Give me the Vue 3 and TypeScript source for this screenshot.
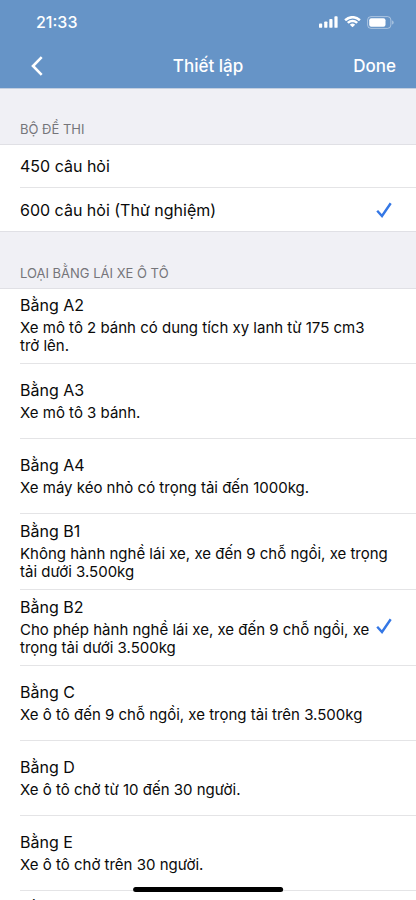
<script setup lang="ts">
import { ref } from 'vue'

interface License {
  id: string
  name: string
  description: string
}

const questionSets: { id: string; label: string }[] = [
  { id: '450', label: '450 câu hỏi' },
  { id: '600', label: '600 câu hỏi (Thử nghiệm)' },
]

const licenses: License[] = [
  { id: 'a2', name: 'Bằng A2', description: 'Xe mô tô 2 bánh có dung tích xy lanh từ 175 cm3 trở\u00a0lên.' },
  { id: 'a3', name: 'Bằng A3', description: 'Xe mô tô 3 bánh.' },
  { id: 'a4', name: 'Bằng A4', description: 'Xe máy kéo nhỏ có trọng tải đến 1000kg.' },
  { id: 'b1', name: 'Bằng B1', description: 'Không hành nghề lái xe, xe đến 9 chỗ ngồi, xe trọng tải dưới 3.500kg' },
  { id: 'b2', name: 'Bằng B2', description: 'Cho phép hành nghề lái xe, xe đến 9 chỗ ngồi, xe trọng tải dưới 3.500kg' },
  { id: 'c', name: 'Bằng C', description: 'Xe ô tô đến 9 chỗ ngồi, xe trọng tải trên 3.500kg' },
  { id: 'd', name: 'Bằng D', description: 'Xe ô tô chở từ 10 đến 30 người.' },
  { id: 'e', name: 'Bằng E', description: 'Xe ô tô chở trên 30 người.' },
  { id: 'f', name: 'Bằng F', description: 'Xe ô tô hạng B2, C, D, E có kéo rơ moóc trọng tải trên 750kg.' },
]

const selectedSet = ref('600')
const selectedLicense = ref('b2')
</script>

<template>
  <div class="screen">
    <header class="top">
      <div class="status">
        <span class="time">21:33</span>
        <div class="indicators">
          <svg class="signal" viewBox="0 0 19 12" aria-hidden="true">
            <rect x="0" y="7.5" width="3.2" height="4.3" rx="0.9" />
            <rect x="5.2" y="5.4" width="3.2" height="6.4" rx="0.9" />
            <rect x="10.3" y="2.9" width="3.2" height="8.9" rx="0.9" />
            <rect x="15.4" y="0.2" width="3.2" height="11.6" rx="0.9" />
          </svg>
          <svg class="wifi" viewBox="0 0 17 12" aria-hidden="true">
            <path d="M8.5 2.4c2.4 0 4.6.9 6.2 2.5.1.1.3.1.5 0l1.2-1.2c.2-.2.2-.4 0-.6a11.4 11.4 0 0 0-15.8 0c-.2.2-.2.4 0 .6l1.2 1.2c.2.1.4.1.5 0A9 9 0 0 1 8.5 2.4z" />
            <path d="M8.5 6.3c1.3 0 2.5.5 3.5 1.3.1.1.3.1.5 0l1.2-1.2c.2-.2.2-.4 0-.6a7.7 7.7 0 0 0-10.4 0c-.2.2-.2.4 0 .6l1.2 1.2c.2.1.4.1.5 0 1-.8 2.2-1.3 3.5-1.3z" />
            <path d="M10.9 8.9c.2-.2.2-.4 0-.5a3.7 3.7 0 0 0-4.8 0c-.2.1-.2.3 0 .5l2.1 2.1c.2.2.4.2.6 0z" />
          </svg>
          <svg class="battery" viewBox="0 0 27 13" aria-hidden="true">
            <rect x="0.6" y="0.6" width="23.3" height="11.8" rx="3.4" fill="none" stroke="#fff" stroke-opacity="0.45" />
            <rect x="2.2" y="2.2" width="16.3" height="8.6" rx="2" />
            <path d="M25.2 4.4v4.2c.9-.4 1.4-1.2 1.4-2.1s-.5-1.7-1.4-2.1z" fill-opacity="0.5" />
          </svg>
        </div>
      </div>
      <nav class="bar">
        <button class="back" type="button" aria-label="Back">
          <svg viewBox="0 0 12 20" aria-hidden="true">
            <path d="M10.7 1.2 2 10l8.7 8.8" fill="none" stroke="#fff" stroke-width="2.6" />
          </svg>
        </button>
        <h1>Thiết lập</h1>
        <button class="done" type="button">Done</button>
      </nav>
    </header>

    <main class="content">
      <h2 id="set-heading">BỘ ĐỀ THI</h2>
      <div class="group" role="radiogroup" aria-labelledby="set-heading">
        <label v-for="set in questionSets" :key="set.id" class="row">
          <input v-model="selectedSet" type="radio" name="question-set" :value="set.id" />
          <span class="body single">
            <span class="name">{{ set.label }}</span>
            <svg v-if="selectedSet === set.id" class="check" viewBox="0 0 16 16" aria-hidden="true">
              <path d="M1.2 8.7 6 14 14.7 1.3" />
            </svg>
          </span>
        </label>
      </div>

      <h2 id="license-heading">LOẠI BẰNG LÁI XE Ô TÔ</h2>
      <div class="group" role="radiogroup" aria-labelledby="license-heading">
        <label v-for="license in licenses" :key="license.id" class="row">
          <input v-model="selectedLicense" type="radio" name="license" :value="license.id" />
          <span class="body double">
            <span class="text">
              <span class="name">{{ license.name }}</span>
              <span class="description">{{ license.description }}</span>
            </span>
            <svg v-if="selectedLicense === license.id" class="check" viewBox="0 0 16 16" aria-hidden="true">
              <path d="M1.2 8.7 6 14 14.7 1.3" />
            </svg>
          </span>
        </label>
      </div>
    </main>
    <div class="home-indicator"></div>
  </div>
</template>

<style>
body {
  margin: 0;
  background: #f0f0f5;
}
</style>

<style scoped>
.screen {
  position: relative;
  display: flex;
  flex-direction: column;
  height: 100vh;
  overflow: hidden;
  font-family: Inter, "Noto Sans", sans-serif;
  color: #0a0a0a;
}

.top {
  flex: none;
  background: #6694c7;
  color: #fff;
}

.status {
  display: flex;
  align-items: center;
  justify-content: space-between;
  height: 44px;
  padding: 0 22px 0 36px;
}

.time {
  font-size: 16px;
  font-weight: 500;
  line-height: 20px;
}

.indicators {
  display: flex;
  align-items: center;
  gap: 6px;
}

.indicators svg {
  display: block;
  fill: #fff;
}

.signal {
  width: 19px;
  height: 12px;
}

.wifi {
  width: 17px;
  height: 12px;
}

.battery {
  width: 27px;
  height: 13px;
}

.bar {
  display: grid;
  grid-template-columns: 1fr auto 1fr;
  align-items: center;
  height: 44px;
  padding: 0 20px;
}

.bar button {
  border: 0;
  background: none;
  color: inherit;
  font: inherit;
  cursor: pointer;
}

.back {
  justify-self: start;
  padding: 0 11px;
}

.back svg {
  display: block;
  width: 12px;
  height: 20px;
}

h1 {
  margin: 0;
  font-size: 17px;
  font-weight: 500;
  line-height: 24px;
}

.bar .done {
  justify-self: end;
  padding: 0;
  font-size: 17px;
  font-weight: 500;
  line-height: 24px;
}

.content {
  flex: 1;
  min-height: 0;
  overflow-y: auto;
  scrollbar-width: none;
  background: #f0f0f5;
  box-shadow: inset 0 1px #c3cfe0;
}

h2 {
  box-sizing: border-box;
  height: 56px;
  margin: 0;
  padding: 32px 20px 0;
  font-size: 13px;
  font-weight: 400;
  line-height: 18px;
  color: #75757a;
}

.group {
  background: #fff;
  box-shadow: inset 0 1px #e0e0e5, inset 0 -1px #e0e0e5;
}

.row {
  position: relative;
  display: block;
  padding-left: 20px;
  cursor: pointer;
}

.row input {
  position: absolute;
  opacity: 0;
  margin: 0;
}

.body {
  box-sizing: border-box;
  display: flex;
  align-items: center;
  justify-content: space-between;
  gap: 6px;
  padding-right: 24px;
  border-bottom: 1px solid #e4e4e6;
}

.row:last-child .body {
  border-bottom-color: transparent;
}

.single {
  min-height: 44px;
}

.double {
  min-height: 75px;
  padding-top: 5px;
  padding-bottom: 8px;
}

.text {
  display: block;
}

.name {
  display: block;
  font-size: 16px;
  line-height: 24px;
}

.description {
  display: block;
  padding-top: 2px;
  font-size: 15px;
  line-height: 18px;
}

.check {
  flex: none;
  width: 16px;
  height: 16px;
  fill: none;
  stroke: #3477e5;
  stroke-width: 2.4;
}

.home-indicator {
  position: absolute;
  bottom: 8px;
  left: 50%;
  width: 36%;
  height: 5px;
  border-radius: 3px;
  background: #000;
  transform: translateX(-50%);
}
</style>
